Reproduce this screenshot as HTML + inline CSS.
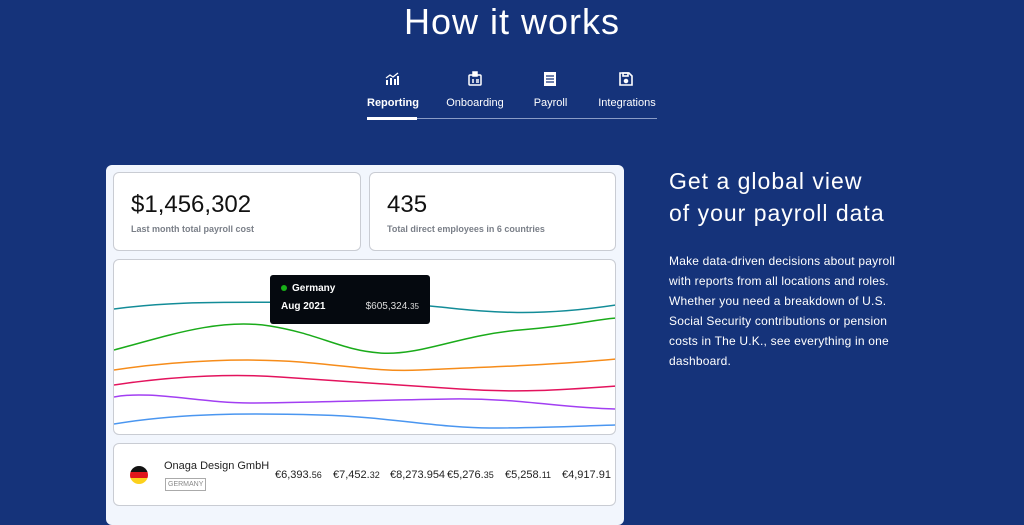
<!DOCTYPE html>
<html><head><meta charset="utf-8"><style>
*{margin:0;padding:0;box-sizing:border-box}
body{width:1024px;height:512px;background:#15337a;font-family:"Liberation Sans",sans-serif;position:relative;overflow:hidden;color:#fff}
.abs{position:absolute}
h1{position:absolute;top:1px;left:0;width:1024px;text-align:center;font-size:36px;font-weight:400;letter-spacing:1px}
.tab{position:absolute;top:97px;font-size:11px;text-align:center}
.card{position:absolute;background:#fff;border:1px solid #c9ccd3;border-radius:6px}
.big{position:absolute;left:17px;top:18px;font-size:24px;color:#111}
.sub{position:absolute;left:17px;top:51px;font-size:9px;color:#7a7f88;font-weight:bold}
.v{position:absolute;top:25px;font-size:11px;color:#222}
.v small{font-size:9px}
</style></head><body>
<h1>How it works</h1>
<svg class="abs" style="left:384px;top:71px" width="16" height="16" viewBox="0 0 16 16" fill="#fff"><rect x="2" y="9" width="2" height="5"/><rect x="6" y="7" width="2" height="7"/><rect x="10" y="8" width="2" height="6"/><rect x="13" y="5" width="2" height="9"/><path d="M2 7 L6 4 L9 6 L14 2" stroke="#fff" stroke-width="1.3" fill="none"/></svg>
<svg class="abs" style="left:467px;top:71px" width="16" height="16" viewBox="0 0 16 16" fill="none" stroke="#fff" stroke-width="1.5"><rect x="2" y="4" width="12" height="10" rx="1"/><rect x="6" y="1" width="4" height="4" fill="#fff"/><path d="M5 9h2M5 11h2M9 9h3M9 11h3"/></svg>
<svg class="abs" style="left:542px;top:71px" width="16" height="16" viewBox="0 0 16 16"><rect x="2" y="1" width="12" height="14" fill="#fff"/><path d="M4 5h8M4 8h8M4 11h8" stroke="#15337a" stroke-width="1.2"/></svg>
<svg class="abs" style="left:618px;top:71px" width="16" height="16" viewBox="0 0 16 16" fill="none" stroke="#fff" stroke-width="1.6"><path d="M2 2h9l3 3v9H2z"/><rect x="5" y="2" width="5" height="3"/><circle cx="8" cy="10" r="1.5" fill="#fff"/></svg>
<div class="tab" style="left:367px;width:50px;font-weight:bold">Reporting</div>
<div class="tab" style="left:445px;width:60px">Onboarding</div>
<div class="tab" style="left:533px;width:35px">Payroll</div>
<div class="tab" style="left:596px;width:62px">Integrations</div>
<div class="abs" style="left:367px;top:118px;width:290px;height:1px;background:#8a9cc6"></div>
<div class="abs" style="left:367px;top:117px;width:50px;height:3px;background:#fff"></div>

<div class="abs" style="left:106px;top:165px;width:518px;height:360px;background:#f2f6fd;border-radius:6px"></div>
<div class="card" style="left:113px;top:172px;width:248px;height:79px"><div class="big">$1,456,302</div><div class="sub">Last month total payroll cost</div></div>
<div class="card" style="left:369px;top:172px;width:247px;height:79px"><div class="big">435</div><div class="sub">Total direct employees in 6 countries</div></div>
<div class="card" style="left:113px;top:259px;width:503px;height:176px;overflow:hidden">
<svg class="abs" style="left:-114px;top:-260px" width="1024" height="512" fill="none" stroke-width="1.5">
<path d="M114 309 C180 300 240 303 300 302 S400 303 440 307 S530 318 616 305" stroke="#138c98"/>
<path d="M114 350 C170 335 220 318 270 326 S340 350 380 353 S460 335 520 330 S590 320 616 318" stroke="#1aab1a"/>
<path d="M114 370 C180 360 250 358 300 362 S380 372 420 370 S540 366 616 359" stroke="#f68c1a"/>
<path d="M114 385 C180 375 240 374 280 377 S400 385 460 389 S560 390 616 386" stroke="#e3135d"/>
<path d="M114 397 C150 390 200 403 250 403 S380 400 450 399 S560 408 616 409" stroke="#a23ff2"/>
<path d="M114 424 C180 413 250 413 320 415 S440 428 490 428 S580 426 616 425" stroke="#4a96f0"/>
</svg>
<div class="abs" style="left:156px;top:15px;width:160px;height:49px;background:#05090f;border-radius:3px;font-size:10px;color:#fff">
<div class="abs" style="left:11px;top:10px;width:6px;height:6px;border-radius:50%;background:#18b018"></div>
<div class="abs" style="left:22px;top:8px;font-weight:bold">Germany</div>
<div class="abs" style="left:11px;top:26px;font-weight:bold">Aug 2021</div>
<div class="abs" style="right:11px;top:26px;color:#ddd">$605,324.<span style="font-size:8px">35</span></div>
</div>
</div>
<div class="card" style="left:113px;top:443px;width:503px;height:63px">
<div class="abs" style="left:16px;top:22px;width:18px;height:18px;border-radius:50%;overflow:hidden;background:linear-gradient(#111 0 33%,#e0161b 33% 66%,#fcd11c 66%)"></div>
<div class="abs" style="left:50px;top:16px;font-size:11px;color:#222">Onaga Design GmbH</div>
<div class="abs" style="left:51px;top:34px;font-size:7px;color:#888;border:1px solid #aaa;padding:2px 2px">GERMANY</div>
<div class="v" style="left:161px">€6,393.<small>56</small></div>
<div class="v" style="left:219px">€7,452.<small>32</small></div>
<div class="v" style="left:276px">€8,273.954</div>
<div class="v" style="left:333px">€5,276.<small>35</small></div>
<div class="v" style="left:391px">€5,258.<small>11</small></div>
<div class="v" style="left:448px">€4,917.91</div>
</div>

<div class="abs" style="left:669px;top:165px;font-size:23px;line-height:32px;letter-spacing:1px">Get a global view<br>of your payroll data</div>
<div class="abs" style="left:669px;top:251px;font-size:12px;line-height:20px;width:244px;letter-spacing:.2px">Make data-driven decisions about payroll with reports from all locations and roles. Whether you need a breakdown of U.S. Social Security contributions or pension costs in The U.K., see everything in one dashboard.</div>
</body></html>
